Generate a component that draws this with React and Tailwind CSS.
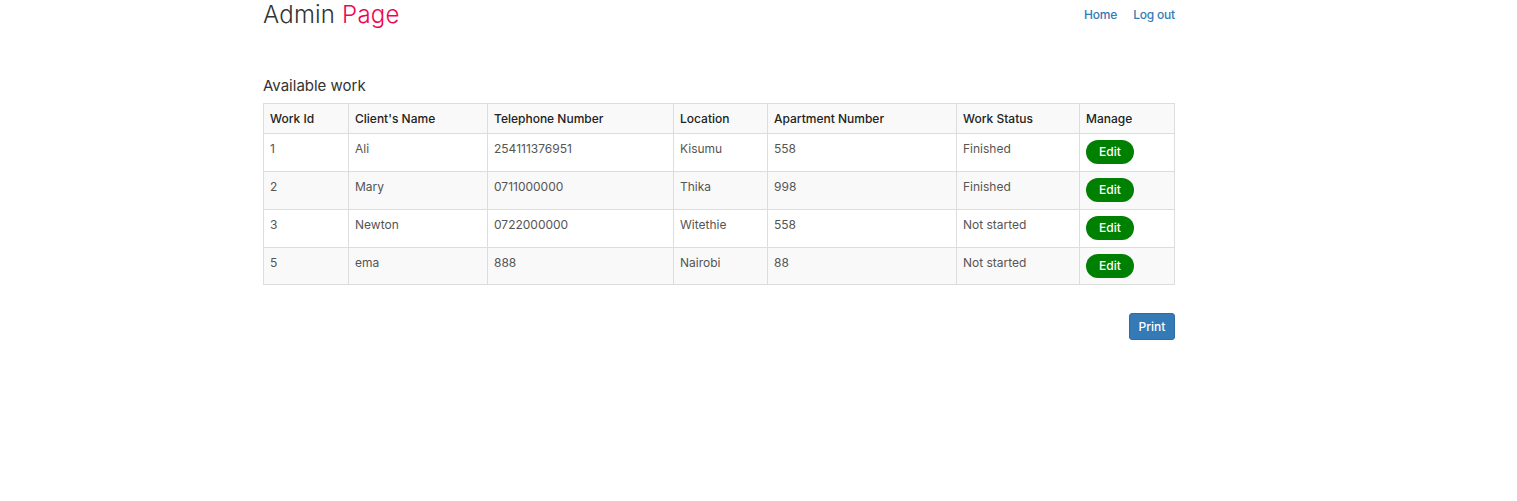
import React from 'react';

const rows = [
  { id: '1', name: 'Ali', phone: '254111376951', location: 'Kisumu', apt: '558', status: 'Finished' },
  { id: '2', name: 'Mary', phone: '0711000000', location: 'Thika', apt: '998', status: 'Finished' },
  { id: '3', name: 'Newton', phone: '0722000000', location: 'Witethie', apt: '558', status: 'Not started' },
  { id: '5', name: 'ema', phone: '888', location: 'Nairobi', apt: '88', status: 'Not started' },
];

export default function App() {
  return (
    <div className="min-h-screen bg-white text-[#333] font-['Inter','Noto_Sans',sans-serif]">
      <div className="ml-[263px] w-[912px]">
        {/* header */}
        <div className="flex items-start justify-between">
          <h1 className="text-[24px] leading-[30px] font-light tracking-[0.2px] text-[#333]">
            Admin <span className="text-[#f0064f]">Page</span>
          </h1>
          <nav className="flex gap-[16px] pt-[6px] text-[12px] leading-[18px] font-medium tracking-[-0.2px] text-[#337ab7]">
            <a href="#">Home</a>
            <a href="#">Log out</a>
          </nav>
        </div>

        <h2 className="mt-[46px] text-[15px] leading-[20px] font-normal text-[#333]">Available work</h2>

        <table className="mt-[7px] w-[911px] table-fixed border-collapse border border-[#ddd] text-[12px] leading-[16px]">
          <colgroup>
            <col className="w-[85px]" />
            <col className="w-[139px]" />
            <col className="w-[186px]" />
            <col className="w-[94px]" />
            <col className="w-[189px]" />
            <col className="w-[123px]" />
            <col className="w-[95px]" />
          </colgroup>
          <tbody>
            <tr className="h-[30px] bg-[#f9f9f9]">
              {['Work Id', "Client's Name", 'Telephone Number', 'Location', 'Apartment Number', 'Work Status', 'Manage'].map((h) => (
                <th key={h} className="border border-[#ddd] px-[6px] text-left font-medium text-[#222]">
                  {h}
                </th>
              ))}
            </tr>
            {rows.map((r, i) => (
              <tr key={r.id} className={`${i === 3 ? 'h-[37px]' : 'h-[38px]'} ${i % 2 === 1 ? 'bg-[#f9f9f9]' : 'bg-white'}`}>
                <td className="border border-[#ddd] px-[6px] pt-[7px] align-top text-[#555]">{r.id}</td>
                <td className="border border-[#ddd] px-[6px] pt-[7px] align-top text-[#555]">{r.name}</td>
                <td className="border border-[#ddd] px-[6px] pt-[7px] align-top text-[#555]">{r.phone}</td>
                <td className="border border-[#ddd] px-[6px] pt-[7px] align-top text-[#555]">{r.location}</td>
                <td className="border border-[#ddd] px-[6px] pt-[7px] align-top text-[#555]">{r.apt}</td>
                <td className="border border-[#ddd] px-[6px] pt-[7px] align-top text-[#555]">{r.status}</td>
                <td className="border border-[#ddd] px-[6px] pt-[6px] pb-[6px] align-top">
                  <button className="h-[24px] w-[48px] rounded-full bg-[#008000] text-[12px] font-medium text-white">
                    Edit
                  </button>
                </td>
              </tr>
            ))}
          </tbody>
        </table>

        <div className="mt-[28px] flex justify-end">
          <button className="h-[27px] w-[46px] rounded-[3px] border border-[#2e6da4] bg-[#337ab7] text-[12px] font-medium text-white">
            Print
          </button>
        </div>
      </div>
    </div>
  );
}
